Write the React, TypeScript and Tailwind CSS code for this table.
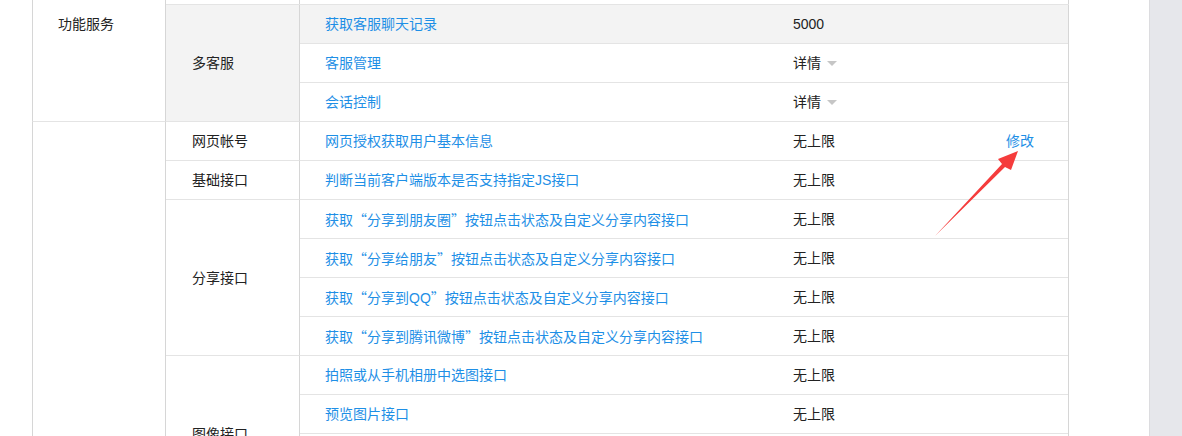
import React from "react";

interface ApiRow {
  name: string;
  value: string;
  dropdown?: boolean;
  action?: string;
  hover?: boolean;
}

interface ApiGroup {
  label: string;
  hover?: boolean;
  rows: ApiRow[];
}

const serviceGroups: ApiGroup[] = [
  {
    label: "多客服",
    hover: true,
    rows: [
      { name: "获取客服聊天记录", value: "5000", hover: true },
      { name: "客服管理", value: "详情", dropdown: true },
      { name: "会话控制", value: "详情", dropdown: true },
    ],
  },
];

const webGroups: ApiGroup[] = [
  {
    label: "网页帐号",
    rows: [{ name: "网页授权获取用户基本信息", value: "无上限", action: "修改" }],
  },
  {
    label: "基础接口",
    rows: [{ name: "判断当前客户端版本是否支持指定JS接口", value: "无上限" }],
  },
  {
    label: "分享接口",
    rows: [
      { name: "获取“分享到朋友圈”按钮点击状态及自定义分享内容接口", value: "无上限" },
      { name: "获取“分享给朋友”按钮点击状态及自定义分享内容接口", value: "无上限" },
      { name: "获取“分享到QQ”按钮点击状态及自定义分享内容接口", value: "无上限" },
      { name: "获取“分享到腾讯微博”按钮点击状态及自定义分享内容接口", value: "无上限" },
    ],
  },
  {
    label: "图像接口",
    rows: [
      { name: "拍照或从手机相册中选图接口", value: "无上限" },
      { name: "预览图片接口", value: "无上限" },
      { name: "上传图片接口", value: "无上限" },
      { name: "下载图片接口", value: "无上限" },
    ],
  },
];

// the quotes are full width in the screenshot, so give them the CJK face
const renderName = (name: string) =>
  name.split(/([“”])/).map((part, i) =>
    part === "“" || part === "”" ? (
      <span key={i} className="inline-block w-[14px] font-['Noto_Sans_CJK_SC']">
        {part}
      </span>
    ) : (
      <React.Fragment key={i}>{part}</React.Fragment>
    )
  );

const Row: React.FC<{ row: ApiRow }> = ({ row }) => (
  <div
    className={`flex h-[39px] items-center border-b border-[#e4e4e4] ${
      row.hover ? "bg-[#f3f3f3]" : ""
    }`}
  >
    <div className="w-[467px] whitespace-nowrap pl-[25px] text-[#1e8fe6]">
      {renderName(row.name)}
    </div>
    <div className="flex w-[213px] items-center pl-[26px] text-[#222]">
      {row.value}
      {row.dropdown && (
        <span className="ml-[6px] mt-[1px] h-0 w-0 border-x-[5px] border-t-[5px] border-x-transparent border-t-[#c6c6c6]" />
      )}
    </div>
    <div className="flex-1 pl-[26px] text-[#1e8fe6]">{row.action}</div>
  </div>
);

const Group: React.FC<{ group: ApiGroup }> = ({ group }) => (
  <div className="flex">
    <div
      className={`flex w-[134px] shrink-0 items-center border-r border-b border-r-[#d6d6d6] border-b-[#e4e4e4] pl-[26px] text-[#222] ${
        group.hover ? "bg-[#f3f3f3]" : ""
      }`}
    >
      {group.label}
    </div>
    <div className="w-[769px] border-r border-[#d6d6d6]">
      {group.rows.map((row) => (
        <Row key={row.name} row={row} />
      ))}
    </div>
  </div>
);

const Arrow: React.FC = () => (
  <svg className="absolute left-0 top-0" width="1182" height="436" viewBox="0 0 1182 436">
    <polygon
      points="935,236 1002,164 998,159 1018,151 1011,170 1005,167"
      fill="#f53c3c"
    />
  </svg>
);

const App: React.FC = () => {
  return (
    <div
      className="relative flex h-[436px] w-[1182px] overflow-hidden bg-white text-[14px] leading-5"
      style={{ fontFamily: '"Liberation Sans", "Noto Sans CJK SC", sans-serif' }}
    >
      <div className="w-[1149px] pl-[32px]">
        {/* 功能服务 block */}
        <div className="flex">
          <div className="w-[134px] shrink-0 border-x border-b border-x-[#d6d6d6] border-b-[#e4e4e4] pl-[25px] pt-[14px] text-[#222]">
            功能服务
          </div>
          <div>
            <div className="h-[5px] border-b border-[#e4e4e4]">
              <div className="flex h-full">
                <div className="w-[134px] border-r border-[#d6d6d6]" />
                <div className="w-[769px] border-r border-[#d6d6d6]" />
              </div>
            </div>
            {serviceGroups.map((g) => (
              <Group key={g.label} group={g} />
            ))}
          </div>
        </div>

        {/* 网页服务 block */}
        <div className="flex">
          <div className="w-[134px] shrink-0 border-x border-[#d6d6d6]" />
          <div>
            {webGroups.map((g) => (
              <Group key={g.label} group={g} />
            ))}
          </div>
        </div>
      </div>
      <div className="flex-1 border-l border-[#dcdcdf] bg-[#e6e7eb]" />
      <Arrow />
    </div>
  );
};

export default App;
